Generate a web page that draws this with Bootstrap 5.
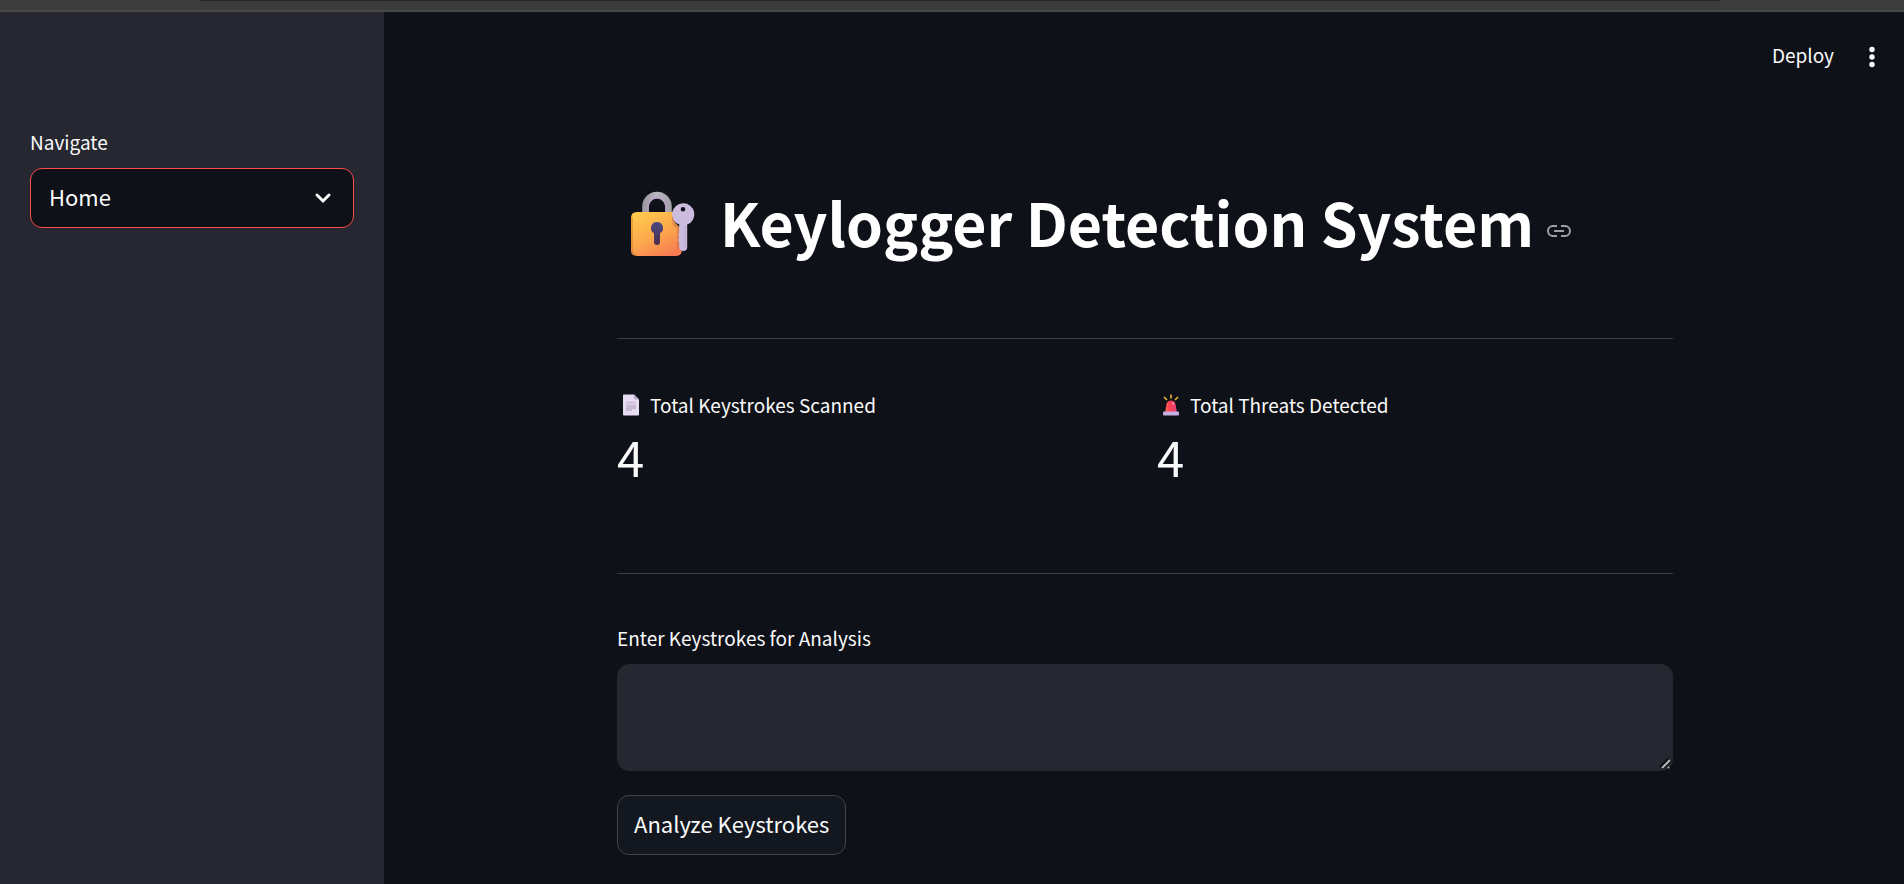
<!DOCTYPE html>
<html lang="en" data-bs-theme="dark">
<head>
<meta charset="utf-8">
<meta name="viewport" content="width=device-width, initial-scale=1">
<title>Keylogger Detection System</title>
<link href="https://cdn.jsdelivr.net/npm/bootstrap@5.3.0/dist/css/bootstrap.min.css" rel="stylesheet">
<style>
  body {
    background: #0e1117;
    color: #fafafa;
    font-family: "Noto Sans CJK SC", "Open Sans", sans-serif;
    font-size: 22px;
    line-height: 36px;
  }
  .window-edge { height: 12px; background: #3c3c3c; border-bottom: 2px solid #474747; }
  .window-tab { margin: 0 184px 0 200px; height: 1px; background: #282828; }
  .side-panel { flex: 0 0 384px; background: #262730; padding: 114px 30px 24px; }
  .field-label { font-size: 19px; line-height: 32px; }
  .input-label { margin-bottom: 10px; }
  .page-select {
    height: 60px;
    padding: 0 54px 4px 18px;
    font-size: 22px;
    color: #fafafa;
    background-color: #0e1117;
    border: 1px solid #ff4b4b;
    border-radius: 12px;
    background-image: url("data:image/svg+xml,%3Csvg xmlns='http://www.w3.org/2000/svg' viewBox='0 0 18 12'%3E%3Cpath d='M3 3l6 6 6-6' fill='none' stroke='%23fafafa' stroke-width='3' stroke-linecap='round'/%3E%3C/svg%3E");
    background-size: 18px 12px;
    background-position: right 21px center;
  }
  .page-select:focus { border-color: #ff4b4b; box-shadow: none; }
  .top-tools { height: 90px; padding-right: 20px; }
  .tool-btn { color: #fafafa; font-size: 19px; line-height: 32px; padding: 0; border: 0; }
  .deploy-btn { margin-right: 26px; padding-bottom: 4px; }
  .content-col { width: 100%; max-width: 1104px; padding: 80px 23px 24px 25px; }
  .page-title { font-size: 59px; line-height: 80px; padding: 0 0 24px 14px; }
  .title-text { padding-bottom: 4px; }
  .lock-icon { width: 65px; height: 66px; margin-right: 24px; }
  .anchor-link { line-height: 1; color: #a0a1a4; margin: 14px 0 0 12px; }
  .rule { height: 1px; background: #3b3d41; }
  .metrics { padding: 2px 0 34px; }
  .metric-icon { width: 18px; height: 22px; margin: 0 10px 0 5px; }
  .metric-value { font-size: 49px; line-height: 70px; }
  .keys-input {
    height: 107px;
    background: #262730;
    border: 1px solid #262730;
    border-radius: 12px;
    color: #fafafa;
  }
  .keys-input:focus { background: #262730; border-color: #ff4b4b; box-shadow: none; }
  .keys-input::-webkit-resizer {
    background: url("data:image/svg+xml,%3Csvg xmlns='http://www.w3.org/2000/svg' viewBox='0 0 15 15'%3E%3Cpath d='M4 13l9-9' stroke='%230e1117' stroke-width='5'/%3E%3Cpath d='M5 13l8-8M11 13l1-1' stroke='%23b8b8b8' stroke-width='2'/%3E%3C/svg%3E") no-repeat right bottom / 15px 15px;
  }
  .analyze-btn {
    height: 60px;
    padding: 0 16px 4px;
    font-size: 22px;
    color: #fafafa;
    background: #131720;
    border: 1px solid #41444c;
    border-radius: 12px;
  }
</style>
</head>
<body class="d-flex flex-column min-vh-100">
  <div class="window-edge"><div class="window-tab"></div></div>
  <div class="d-flex flex-grow-1">
    <aside class="side-panel">
      <label class="field-label input-label d-block" for="page">Navigate</label>
      <select class="form-select page-select" id="page">
        <option>Home</option>
      </select>
    </aside>

    <div class="flex-grow-1 d-flex flex-column">
      <header class="top-tools d-flex align-items-center justify-content-end">
        <button class="btn tool-btn deploy-btn" type="button">Deploy</button>
        <button class="btn tool-btn d-flex" type="button" aria-label="Menu">
          <svg width="24" height="24" viewBox="0 0 24 24" fill="currentColor"><circle cx="12" cy="4.5" r="2.7"/><circle cx="12" cy="12" r="2.7"/><circle cx="12" cy="19.5" r="2.7"/></svg>
        </button>
      </header>

      <main class="content-col mx-auto">
        <h1 class="page-title d-flex align-items-center fw-bold mb-0">
          <svg class="lock-icon flex-shrink-0" viewBox="0 0 65 66" aria-hidden="true">
            <defs>
              <linearGradient id="gold" x1="0.2" y1="0" x2="0.8" y2="1"><stop offset="0" stop-color="#ffc94c"/><stop offset="0.5" stop-color="#fca94c"/><stop offset="1" stop-color="#f67a52"/></linearGradient>
              <linearGradient id="steel" x1="0" y1="0" x2="1" y2="0"><stop offset="0" stop-color="#9f9da3"/><stop offset="0.5" stop-color="#bcb8c2"/><stop offset="1" stop-color="#a6a3aa"/></linearGradient>
              <linearGradient id="hole" x1="0" y1="0" x2="0" y2="1"><stop offset="0" stop-color="#4b4a80"/><stop offset="1" stop-color="#4d2d50"/></linearGradient>
            </defs>
            <path d="M14.5 23V15.500a11.500 11.500 0 0 1 23 0V23" fill="none" stroke="url(#steel)" stroke-width="6.500"/>
            <path d="M17 22V16a9 9 0 0 1 18 0V22" fill="none" stroke="#b7a0cc" stroke-width="1.500"/>
            <path d="M6 21H42C42 30 45 34 49 36V57Q49 60 51 60Q50 65 45 65H6Q0 65 0 59V27Q0 21 6 21Z" fill="url(#gold)"/>
            <path d="M1 26V59Q1 64 6 64" fill="none" stroke="#d9782f" stroke-width="1.500" opacity="0.7"/>
            <path d="M42 25C41 33 45 36 47 37V58" fill="none" stroke="#cf7350" stroke-width="2" opacity="0.7"/>
            <path d="M26 31a6 6 0 0 0-3 11.200V51a3 3 0 0 0 6 0V42.200A6 6 0 0 0 26 31Z" fill="url(#hole)"/>
            <path fill-rule="evenodd" d="M52 12.300a11 11 0 0 0-3.800 21.300V42L47 44l1.200 2V47L47 49l1.200 2V56a4 4 0 0 0 8 0V33.600A11 11 0 0 0 52 12.300ZM52 16a2.300 2.300 0 1 1 0 4.600a2.300 2.300 0 0 1 0-4.600Z" fill="#cbbbdc"/>
            <path d="M54 35V57" stroke="#bba8d2" stroke-width="1"/>
          </svg>
          <span class="title-text">Keylogger Detection System</span>
          <a class="anchor-link d-flex" href="#" aria-label="Link to heading">
            <svg width="26" height="14" viewBox="0 0 26 14" fill="none" stroke="currentColor" stroke-width="2"><path d="M11 2H7a5 5 0 0 0 0 10h4M15 2h4a5 5 0 0 1 0 10h-4M8 7h10"/></svg>
          </a>
        </h1>

        <div class="rule mt-5 mb-5" role="separator"></div>

        <section class="metrics">
          <div class="row gx-4">
            <div class="col-6">
              <div class="field-label d-flex align-items-center">
                <svg class="metric-icon" viewBox="0 0 18 22" aria-hidden="true"><path d="M1 1.500Q1 .5 2 .5H12L17 5.500V20.500Q17 21.500 16 21.500H2Q1 21.500 1 20.500Z" fill="#e8dcf3"/><path d="M12 .5V4.500Q12 5.500 13 5.500H17Z" fill="#b9a9cb"/><path d="M4 7.500H14V10.500H4Z" fill="#cfc4d8"/><path d="M4 12H14M4 14H14M4 16H10" stroke="#a596b5"/></svg>
                <span>Total Keystrokes Scanned</span>
              </div>
              <div class="metric-value">4</div>
            </div>
            <div class="col-6">
              <div class="field-label d-flex align-items-center">
                <svg class="metric-icon" viewBox="0 0 18 22" aria-hidden="true"><defs><linearGradient id="lamp"><stop offset="0" stop-color="#ff6b55"/><stop offset="0.4" stop-color="#ff3e50"/><stop offset="1" stop-color="#e0447e"/></linearGradient></defs><path d="M9 .5V4.500M2 3L5 6M16 3L13 6" stroke="#f5b92e" stroke-width="1.600"/><path d="M3 19L4.500 10Q5.500 6.500 9 6.500T13.500 10L15 19Z" fill="url(#lamp)"/><rect x="1" y="17.500" width="16" height="4" rx="1" fill="#c5aee2"/><circle cx="11" cy="9.500" r="1" fill="#ffb5c0"/></svg>
                <span>Total Threats Detected</span>
              </div>
              <div class="metric-value">4</div>
            </div>
          </div>
        </section>

        <div class="rule mt-5 mb-5" role="separator"></div>

        <form>
          <label class="field-label input-label d-block" for="keys">Enter Keystrokes for Analysis</label>
          <textarea class="form-control keys-input mb-4" id="keys"></textarea>
          <button class="btn analyze-btn" type="button">Analyze Keystrokes</button>
        </form>
      </main>
    </div>
  </div>
<script src="https://cdn.jsdelivr.net/npm/bootstrap@5.3.0/dist/js/bootstrap.bundle.min.js"></script>
</body>
</html>
